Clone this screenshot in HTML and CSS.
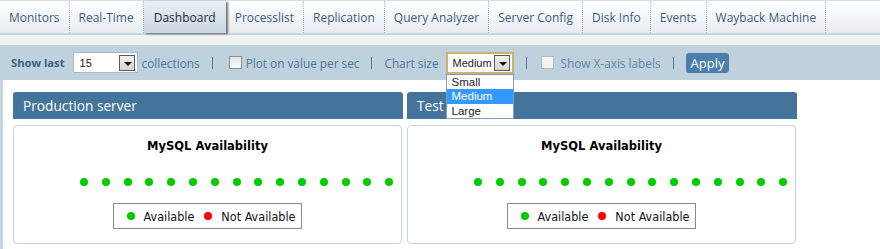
FILE: index.html
```html
<!DOCTYPE html>
<html lang="en">
<head>
  <meta charset="UTF-8">
  <title>Dashboard</title>
  <link rel="stylesheet" href="styles.css">
</head>
<body>

  <nav class="tabs">
    <ul>
      <li><a href="#">Monitors</a></li>
      <li><a href="#">Real-Time</a></li>
      <li class="active"><a href="#">Dashboard</a></li>
      <li><a href="#">Processlist</a></li>
      <li><a href="#">Replication</a></li>
      <li><a href="#">Query Analyzer</a></li>
      <li><a href="#">Server Config</a></li>
      <li><a href="#">Disk Info</a></li>
      <li><a href="#">Events</a></li>
      <li><a href="#">Wayback Machine</a></li>
    </ul>
  </nav>

  <form class="toolbar" action="#">
    <strong class="lbl">Show last</strong>
    <span class="select sel-last"><span class="val">15</span><span class="arrow"></span></span>
    <span class="txt">collections</span>
    <span class="sep"></span>
    <span class="check"></span>
    <span class="txt">Plot on value per sec</span>
    <span class="sep"></span>
    <span class="txt first">Chart size</span>
    <span class="select sel-size focus">
      <span class="val">Medium</span><span class="arrow"></span>
      <ul class="dropdown">
        <li>Small</li>
        <li class="hl">Medium</li>
        <li>Large</li>
      </ul>
    </span>
    <span class="sep"></span>
    <span class="check light"></span>
    <span class="txt dim">Show X-axis labels</span>
    <span class="sep"></span>
    <button type="button" class="apply">Apply</button>
  </form>

  <div class="content">
    <div class="col">
      <div class="head">Production server</div>
      <div class="card">
        <div class="title">MySQL Availability</div>
        <div class="dots">
          <i></i><i></i><i></i><i></i><i></i><i></i><i></i><i></i><i></i><i></i><i></i><i></i><i></i><i></i><i></i>
        </div>
        <div class="legend">
          <i class="ok"></i><span>Available</span>
          <i class="bad"></i><span>Not Available</span>
        </div>
      </div>
    </div>
    <div class="col">
      <div class="head">Test server</div>
      <div class="card">
        <div class="title">MySQL Availability</div>
        <div class="dots">
          <i></i><i></i><i></i><i></i><i></i><i></i><i></i><i></i><i></i><i></i><i></i><i></i><i></i><i></i><i></i>
        </div>
        <div class="legend">
          <i class="ok"></i><span>Available</span>
          <i class="bad"></i><span>Not Available</span>
        </div>
      </div>
    </div>
  </div>

</body>
</html>
```

FILE: styles.css
```css
/* ─── Base ─── */
body {
  margin: 0;
  background: #f2f2f2;
  font-family: 'Open Sans', 'Noto Sans', sans-serif;
  font-size: 12px;
  height: 249px;
  overflow: hidden;
}

/* ─── Tabs ─── */
.tabs {
  height: 32px;
  border-top: 1px solid #d3dee8;
  border-bottom: 2px solid #c6d5e2;
  background: linear-gradient(#ffffff, #e7ecf1);
}
.tabs ul { list-style: none; margin: 0; padding: 0; display: flex; height: 100%; }
.tabs li { border-right: 1px dotted #aac0d3; display: flex; }
.tabs a {
  display: flex; align-items: center;
  padding: 0 9px;
  color: #3d5c7c; text-decoration: none; font-size: 12px;
}
.tabs li.active {
  background: linear-gradient(#eaeff4, #cbd7e2);
  box-shadow: 2px 1px 2px rgba(0,0,0,0.55);
  border-right: none;
  position: relative;
}
.tabs li.active a { color: #1e2736; padding: 0 10px; }

/* ─── Toolbar ─── */
.toolbar {
  margin: 10px 0 0;
  height: 35px;
  background: #c0d1de;
  display: flex; align-items: center;
  padding-left: 11px;
  color: #4d7699;
  font-size: 11.8px;
}
.lbl { color: #3a6184; font-weight: bold; font-size: 11.2px; margin-right: 8px; }
.txt { margin-left: 4px; }
.txt.first { margin-left: 0; }
.dim { color: #5f86a8; margin-left: 7px; }
.sep { width: 1px; height: 12px; background: #4d7699; margin: 0 12px; }

.select {
  position: relative;
  display: flex; align-items: center; justify-content: space-between;
  background: #fff;
  border: 1px solid #a6bacb;
  font-family: 'Liberation Sans', Arial, sans-serif; font-size: 11px; color: #222;
  box-sizing: border-box;
}
.sel-last { width: 65px; height: 21px; padding: 0 2px 0 6px; }
.sel-size { width: 68px; height: 22px; padding: 0 2px 0 6px; margin-left: 7px; }
.select.focus { border: 2px solid #cfb06b; padding-left: 5px; }
.arrow {
  width: 16px; height: 16px; box-sizing: border-box;
  border: 1px solid #5a5a5a;
  background: linear-gradient(#f2f2f2, #d6d6d6);
  position: relative;
}
.arrow::after {
  content: ''; position: absolute; left: 4px; top: 6px;
  border-left: 4px solid transparent; border-right: 4px solid transparent;
  border-top: 4px solid #111;
}
.dropdown {
  position: absolute; left: -2px; top: 20px;
  width: 68px; box-sizing: border-box;
  margin: 0; padding: 0; list-style: none;
  background: #fff; border: 1px solid #7f9db9;
  font-size: 11.5px; z-index: 10;
}
.dropdown li { height: 14.5px; line-height: 14px; padding-left: 5px; }
.dropdown li.hl { background: #3399ff; color: #fff; }

.check {
  width: 13px; height: 13px; box-sizing: border-box;
  border: 1px solid #8d8d8d;
  background: linear-gradient(#e6e6e6, #fafafa);
  margin-left: 4px;
}
.check.light { border-color: #b9b9b9; background: #f3f3f3; margin-left: 2px; }

.apply {
  height: 20px; padding: 0 5px;
  border: none; border-radius: 3px;
  background: #4a7fab; color: #fff;
  font-family: 'Open Sans', sans-serif; font-size: 13px;
  line-height: 20px;
}

/* ─── Content ─── */
.content {
  background: #fff;
  border-left: 3px solid #c5d5e2;
  height: 157px;
  padding: 12px 0 0 10px;
  display: flex; gap: 4px;
}
.col { width: 390px; }
.head {
  height: 27px; line-height: 27px;
  background: #44739b; color: #fff;
  border-radius: 3px 3px 0 0;
  padding-left: 10px;
  font-size: 13.7px;
}
.card {
  margin-top: 6px;
  width: 389px; height: 119px; box-sizing: border-box;
  border: 1px solid #c6d3df; border-radius: 4px;
  text-align: center;
  overflow: hidden;
}
.title {
  margin-top: 13px;
  font-family: 'DejaVu Sans', Verdana, sans-serif; font-weight: bold; font-size: 11.5px;
  color: #000;
}
.dots {
  display: flex; gap: 13.8px;
  padding-left: 66px;
  margin-top: 25px;
  width: 312px;
  height: 8px;
}
.dots i { flex: none; width: 8px; height: 8px; border-radius: 50%; background: #00cc00; }
.legend {
  display: inline-flex; align-items: center;
  margin-top: 17px;
  height: 24px; padding: 0 6px 0 13px;
  border: 1px solid #8a8a8a;
  font-family: 'DejaVu Sans Condensed', 'DejaVu Sans', sans-serif; font-size: 12.5px; color: #111;
}
.legend i { width: 8px; height: 8px; border-radius: 50%; margin-right: 9px; }
.legend i.ok { background: #00cc00; }
.legend i.bad { background: #ff0000; margin-left: 10px; }
```
